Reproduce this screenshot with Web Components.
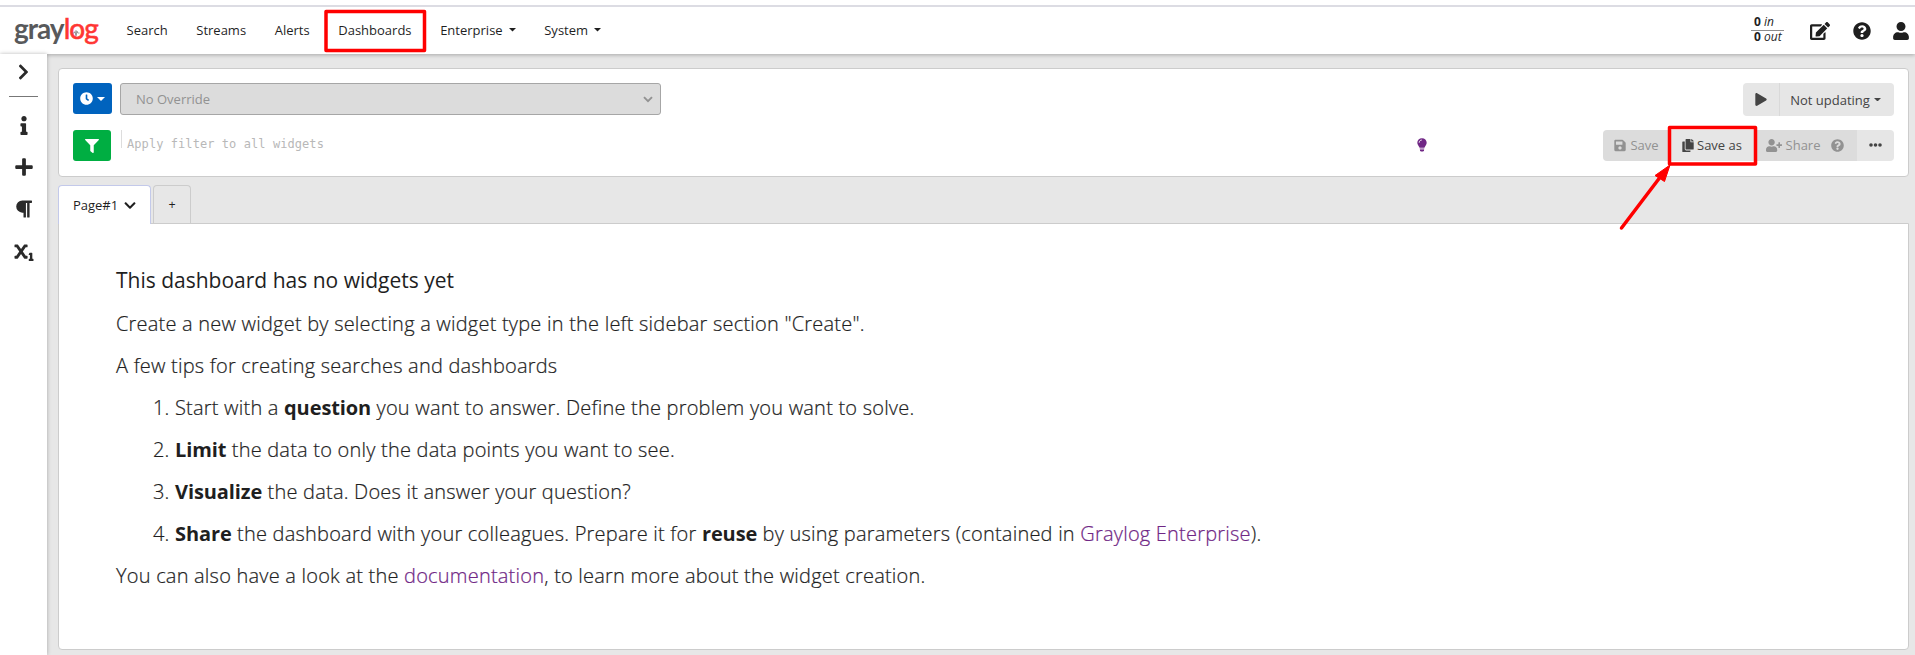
<!DOCTYPE html>
<html lang="en">
<head>
<meta charset="utf-8">
<title>Graylog - Dashboards</title>
<style>
html,body{margin:0;height:100%;overflow:hidden;background:#fff}
body{font-family:"Open Sans","Noto Sans",sans-serif;color:#1f1f1f}
</style>
</head>
<body>
<gl-app></gl-app>
<script>
const ICONS = {
  clock:['0 0 512 512','<path d="M256 8C119 8 8 119 8 256s111 248 248 248 248-111 248-248S393 8 256 8zm92.500 313l-20 25a16 16 0 0 1-22.500 2.500l-67-49.720a40 40 0 0 1-15-31.230V112a16 16 0 0 1 16-16h32a16 16 0 0 1 16 16v144l58 42.500a16 16 0 0 1 2.500 22.500z"/>'],
  filter:['0 0 512 512','<path d="M487.976 0H24.028C2.710 0-8.047 25.866 7.058 40.971L192 225.941V432c0 7.831 3.821 15.170 10.237 19.662l80 55.980C298.020 518.690 320 507.493 320 487.980V225.941l184.947-184.970C520.021 25.896 509.338 0 487.976 0z"/>'],
  right:['0 0 320 512','<path d="M285.476 272.971L91.132 467.314c-9.373 9.373-24.569 9.373-33.941 0l-22.667-22.667c-9.357-9.357-9.375-24.522-.04-33.901L188.505 256 34.484 101.255c-9.335-9.379-9.317-24.544.04-33.901l22.667-22.667c9.373-9.373 24.569-9.373 33.941 0L285.475 239.030c9.373 9.372 9.373 24.568.001 33.941z"/>'],
  down:['0 0 448 512','<path transform="translate(480 96) rotate(90)" d="M285.476 272.971L91.132 467.314c-9.373 9.373-24.569 9.373-33.941 0l-22.667-22.667c-9.357-9.357-9.375-24.522-.04-33.901L188.505 256 34.484 101.255c-9.335-9.379-9.317-24.544.04-33.901l22.667-22.667c9.373-9.373 24.569-9.373 33.941 0L285.475 239.030c9.373 9.372 9.373 24.568.001 33.941z"/>'],
  info:['0 0 192 512','<path d="M20 424.229h20V279.771H20c-11.046 0-20-8.954-20-20V212c0-11.046 8.954-20 20-20h112c11.046 0 20 8.954 20 20v212.229h20c11.046 0 20 8.954 20 20V492c0 11.046-8.954 20-20 20H20c-11.046 0-20-8.954-20-20v-47.771c0-11.046 8.954-20 20-20zM96 0C56.235 0 24 32.235 24 72s32.235 72 72 72 72-32.235 72-72S135.764 0 96 0z"/>'],
  plus:['0 0 448 512','<path d="M416 208H272V64c0-17.670-14.330-32-32-32h-32c-17.670 0-32 14.330-32 32v144H32c-17.670 0-32 14.330-32 32v32c0 17.670 14.330 32 32 32h144v144c0 17.670 14.330 32 32 32h32c17.670 0 32-14.330 32-32V304h144c17.670 0 32-14.330 32-32v-32c0-17.670-14.330-32-32-32z"/>'],
  para:['0 0 448 512','<path d="M448 48v32a16 16 0 0 1-16 16h-48v368a16 16 0 0 1-16 16h-32a16 16 0 0 1-16-16V96h-32v368a16 16 0 0 1-16 16h-32a16 16 0 0 1-16-16V352h-32a160 160 0 0 1 0-320h240a16 16 0 0 1 16 16z"/>'],
  sub:['0 0 512 512','<path d="M496 448h-16V304a16 16 0 0 0-16-16h-48a16 16 0 0 0-14.290 8.830l-16 32A16 16 0 0 0 400 352h16v96h-16a16 16 0 0 0-16 16v32a16 16 0 0 0 16 16h96a16 16 0 0 0 16-16v-32a16 16 0 0 0-16-16zM336 64h-67a16 16 0 0 0-13.140 6.870l-79.900 115-79.900-115A16 16 0 0 0 83 64H16A16 16 0 0 0 0 80v48a16 16 0 0 0 16 16h33.480l77.810 112-77.810 112H16a16 16 0 0 0-16 16v48a16 16 0 0 0 16 16h67a16 16 0 0 0 13.140-6.870l79.900-115 79.900 115A16 16 0 0 0 269 448h67a16 16 0 0 0 16-16v-48a16 16 0 0 0-16-16h-33.480l-77.810-112 77.810-112H336a16 16 0 0 0 16-16V80a16 16 0 0 0-16-16z"/>'],
  help:['0 0 512 512','<path d="M504 256c0 136.997-111.043 248-248 248S8 392.997 8 256C8 119.083 119.043 8 256 8s248 111.083 248 248zM262.655 90c-54.497 0-89.255 22.957-116.549 63.758-3.536 5.286-2.353 12.415 2.715 16.258l34.699 26.310c5.205 3.947 12.621 3.008 16.665-2.122 17.864-22.658 30.113-35.797 57.303-35.797 20.429 0 45.698 13.148 45.698 32.958 0 14.976-12.363 22.667-32.534 33.976C247.128 238.528 216 254.941 216 296v4c0 6.627 5.373 12 12 12h56c6.627 0 12-5.373 12-12v-1.333c0-28.462 83.186-29.647 83.186-106.667 0-58.002-60.165-102-116.531-102zM256 338c-25.365 0-46 20.635-46 46 0 25.364 20.635 46 46 46s46-20.636 46-46c0-25.365-20.635-46-46-46z"/>'],
  user:['0 0 448 512','<path d="M224 256c70.700 0 128-57.300 128-128S294.700 0 224 0 96 57.300 96 128s57.300 128 128 128zm89.600 32h-16.700c-22.200 10.200-46.900 16-72.900 16s-50.600-5.800-72.900-16h-16.700C60.200 288 0 348.200 0 422.400V464c0 26.500 21.500 48 48 48h352c26.500 0 48-21.500 48-48v-41.600c0-74.200-60.200-134.400-134.400-134.400z"/>'],
  userplus:['0 0 640 512','<path d="M624 208h-64v-64c0-8.800-7.200-16-16-16h-32c-8.800 0-16 7.200-16 16v64h-64c-8.800 0-16 7.200-16 16v32c0 8.800 7.200 16 16 16h64v64c0 8.800 7.200 16 16 16h32c8.800 0 16-7.200 16-16v-64h64c8.800 0 16-7.200 16-16v-32c0-8.800-7.200-16-16-16zM224 256c70.700 0 128-57.300 128-128S294.700 0 224 0 96 57.300 96 128s57.300 128 128 128zm89.600 32h-16.700c-22.200 10.200-46.900 16-72.900 16s-50.600-5.800-72.900-16h-16.700C60.200 288 0 348.200 0 422.400V464c0 26.500 21.500 48 48 48h352c26.500 0 48-21.500 48-48v-41.600c0-74.200-60.200-134.400-134.400-134.400z"/>'],
  edit:['0 0 576 512','<path d="M402.600 83.200l90.200 90.200c3.800 3.800 3.800 10 0 13.800L274.400 405.600l-92.800 10.300c-12.400 1.400-22.900-9.100-21.500-21.500l10.300-92.800L388.800 83.200c3.800-3.800 10-3.800 13.800 0zm162-22.900l-48.800-48.800c-15.200-15.200-39.900-15.200-55.200 0l-35.400 35.400c-3.800 3.800-3.800 10 0 13.800l90.200 90.200c3.800 3.800 10 3.800 13.800 0l35.400-35.400c15.200-15.300 15.200-40 0-55.200zM384 346.200V448H64V128h229.800c3.200 0 6.200-1.300 8.500-3.500l40-40c7.600-7.600 2.200-20.500-8.500-20.500H48C21.500 64 0 85.500 0 112v352c0 26.500 21.500 48 48 48h352c26.500 0 48-21.500 48-48V306.200c0-10.700-12.900-16-20.500-8.500l-40 40c-2.200 2.300-3.500 5.300-3.500 8.500z"/>'],
  save:['0 0 448 512','<path d="M433.941 129.941l-83.882-83.882A48 48 0 0 0 316.118 32H48C21.490 32 0 53.490 0 80v352c0 26.510 21.490 48 48 48h352c26.510 0 48-21.490 48-48V163.882a48 48 0 0 0-14.059-33.941zM224 416c-35.346 0-64-28.654-64-64 0-35.346 28.654-64 64-64s64 28.654 64 64c0 35.346-28.654 64-64 64zm96-304.520V212c0 6.627-5.373 12-12 12H76c-6.627 0-12-5.373-12-12V108c0-6.627 5.373-12 12-12h228.520c3.183 0 6.235 1.264 8.485 3.515l3.480 3.480A11.996 11.996 0 0 1 320 111.480z"/>'],
  copy:['0 0 448 512','<path d="M320 448v40c0 13.255-10.745 24-24 24H24c-13.255 0-24-10.745-24-24V120c0-13.255 10.745-24 24-24h72v296c0 30.879 25.121 56 56 56h168zm0-344V0H152c-13.255 0-24 10.745-24 24v368c0 13.255 10.745 24 24 24h272c13.255 0 24-10.745 24-24V128H344c-13.200 0-24-10.800-24-24zm120.971-31.029L375.029 7.029A24 24 0 0 0 358.059 0H352v96h96v-6.059a24 24 0 0 0-7.029-16.970z"/>'],
  play:['0 0 448 512','<path d="M424.400 214.700L72.400 6.600C43.800-10.300 0 6.100 0 47.900V464c0 37.500 40.700 60.100 72.400 41.300l352-208c31.400-18.500 31.500-64.100 0-82.600z"/>'],
  dots:['0 0 13 4','<circle cx="2" cy="2" r="1.800"/><circle cx="6.500" cy="2" r="1.800"/><circle cx="11" cy="2" r="1.800"/>'],
  bulb:['0 0 10 14','<path d="M5 .3C2.300.300.300 2.300.300 4.800c0 2 1.500 3.200 2.300 5h4.800c.8-1.800 2.300-3 2.300-5C9.700 2.300 7.700.300 5 .3z"/><path d="M2.700 10.200h4.600v1.200H2.700z" opacity=".55"/><path d="M3 11.600h4v1L6.200 13.500H3.800L3 12.600z"/><path d="M2.200 4.700c0-1.500 1-2.600 2.600-2.700" fill="none" stroke="#fff" stroke-width=".9"/>'],
  caret:['0 0 8 4','<path d="M0 0h8L4 4z"/>'],
  selectarrow:['0 0 10 7','<path d="M1 1.200l4 4 4-4" fill="none" stroke="currentColor" stroke-width="1.900"/>']
};
function define(name, html, css) {
  customElements.define(name, class extends HTMLElement {
    constructor() {
      super();
      const t = document.createElement('template');
      t.innerHTML = '<style>*{box-sizing:border-box}' + css + '</style>' + html;
      this.attachShadow({mode: 'open'}).appendChild(t.content.cloneNode(true));
    }
  });
}
customElements.define('gl-icon', class extends HTMLElement {
  connectedCallback() {
    if (this.shadowRoot) return;
    const [vb, body] = ICONS[this.getAttribute('name')];
    this.attachShadow({mode: 'open'}).innerHTML =
      `<style>:host{display:inline-flex;flex:none}svg{display:block;fill:currentColor}</style><svg viewBox="${vb}" width="${this.getAttribute('w')}" height="${this.getAttribute('h')}">${body}</svg>`;
  }
});

define('gl-logo', `<span class="g">gray</span><span class="r">l<span class="o">o<svg width="8" height="8" viewBox="0 0 8 8"><path d="M.5 4h1.800l.7-1.500L4 6.500 5 2l.7 2h1.800M4 1v6" fill="none" stroke="#888" stroke-width=".8"/></svg></span>g</span>`,
`:host{display:block;height:36px;font:700 28px/36px Lato,sans-serif;letter-spacing:-1px;white-space:nowrap}
.g{color:#58595b}.r{color:#ff3633;font-weight:400;-webkit-text-stroke:.6px #ff3633}.o{position:relative}svg{position:absolute;left:50%;bottom:8px;margin-left:-4.500px}`);

define('gl-nav-item', `<slot></slot>`,
`:host{display:flex;align-items:center;height:20px;font-size:13px;line-height:20px;gap:6px;white-space:nowrap}`);

define('gl-throughput', `<div><b>0</b> <i>in</i></div><div class="o"><b>0</b> <i>out</i></div>`,
`:host{display:block;width:33px;font-size:12px;line-height:14px}div{padding-left:3px;height:15px;white-space:nowrap}.o{border-top:1px solid #8c8c8c;line-height:11px}`);

define('gl-navbar', `<gl-logo></gl-logo>
<nav><gl-nav-item>Search</gl-nav-item><gl-nav-item>Streams</gl-nav-item><gl-nav-item>Alerts</gl-nav-item><gl-nav-item>Dashboards</gl-nav-item><gl-nav-item>Enterprise <gl-icon name="caret" w="7" h="3.500"></gl-icon></gl-nav-item><gl-nav-item>System <gl-icon name="caret" w="7" h="3.500"></gl-icon></gl-nav-item></nav>
<gl-throughput></gl-throughput>
<div class="icons"><gl-icon name="edit" w="20" h="18"></gl-icon><gl-icon name="help" w="18" h="18"></gl-icon><gl-icon name="user" w="16" h="18"></gl-icon></div>`,
`:host{display:flex;height:54px;padding:5px 6px 0 14px;box-sizing:border-box;background:linear-gradient(#dcdce3,#dcdce3) 0 5px/100% 2px no-repeat #fff;align-items:flex-start;position:relative;z-index:1;box-shadow:0 1px 4px rgba(0,0,0,.28)}
gl-logo{width:112.500px;margin-top:5px}nav{display:flex;gap:28.600px;flex:1;margin-top:15px}gl-throughput{margin-top:10px}.icons{display:flex;gap:23px;margin:17px 0 0 26px;align-items:center}.icons gl-icon:last-child{margin-left:-1px}`);

define('gl-sidebar', `<gl-icon name="right" w="11" h="18"></gl-icon><hr><gl-icon name="info" w="8" h="19"></gl-icon><gl-icon name="plus" w="18" h="20"></gl-icon><gl-icon name="para" w="17" h="20"></gl-icon><gl-icon name="sub" w="20" h="19"></gl-icon>`,
`:host{display:grid;grid-template-rows:36px 12px 42px 42px 42px 42px;place-items:center;align-content:start;width:47px;background:#fff;color:#2a2a2a;box-shadow:0 0 4px rgba(0,0,0,.28);position:relative;z-index:2}
hr{width:29px;height:1px;border:0;background:#777;margin:0}gl-icon[name=info],gl-icon[name=plus],gl-icon[name=para],gl-icon[name=sub]{margin-top:4px}`);

define('gl-button', `<slot></slot>`,
`:host{display:flex;box-sizing:border-box;align-items:center;justify-content:center;height:31px;font-size:13px;white-space:nowrap;color:#444;background:#e6e6e6}
:host([kind=primary]){background:#0063be;color:#fff;border-radius:3px;gap:4px}:host([kind=success]){background:#00ae42;color:#fff;border-radius:3px}
:host([disabled]){background:#dcdcdc;color:#929292}`);

define('gl-query-bar', `<div class="row"><gl-button kind="primary" style="width:39px"><gl-icon name="clock" w="13" h="13"></gl-icon><gl-icon name="caret" w="8" h="4"></gl-icon></gl-button>
<div class="select"><span>No Override</span><gl-icon name="selectarrow" w="10" h="7"></gl-icon></div><i></i>
<div class="group refresh"><gl-button style="width:36px"><gl-icon name="play" w="12" h="13"></gl-icon></gl-button><gl-button class="upd">Not updating<gl-icon name="caret" w="7" h="3.500"></gl-icon></gl-button></div></div>
<div class="row two"><gl-button kind="success" style="width:38px"><gl-icon name="filter" w="14" h="14"></gl-icon></gl-button><div class="input">Apply filter to all widgets</div><gl-icon class="bulb" name="bulb" w="10" h="14"></gl-icon><i></i>
<div class="group acts"><gl-button disabled style="width:65px;gap:4px;padding-left:2px"><gl-icon name="save" w="12" h="13"></gl-icon>Save</gl-button><gl-button style="width:89px;gap:3px;padding-right:1px"><gl-icon name="copy" w="12" h="13"></gl-icon>Save as</gl-button><gl-button disabled style="width:100px;gap:4px;padding-right:4px"><gl-icon name="userplus" w="16" h="13"></gl-icon>Share<gl-icon name="help" w="13" h="13" style="margin-left:7px"></gl-icon></gl-button><gl-button style="width:37px;padding-right:1px"><gl-icon name="dots" w="13" h="4"></gl-icon></gl-button></div></div>`,
`:host{display:flex;flex-direction:column;box-sizing:border-box;gap:15px;height:109px;padding:14px 14px 0;background:#fff;border:1px solid #ccc;border-radius:4px}
.row{display:flex;height:32px;align-items:flex-start}.two{height:31px}i{flex:1}.select{display:flex;align-items:center;justify-content:space-between;width:541px;height:32px;margin-left:8px;padding:0 7px 0 15px;background:#dcdcdc;border:1px solid #a6a6a6;border-radius:3px;font-size:13px;color:#929292}
.group{display:flex;border-radius:4px;overflow:hidden}.acts gl-button{padding-bottom:1px}.refresh gl-button{height:33px}.upd{width:115px;border-left:1px solid #d9d9d9;gap:4px;padding-right:3px}
.input{width:300px;height:18px;margin-left:10px;padding-left:5px;border-left:1px solid #ddd;font:12px/28px "DejaVu Sans Mono",monospace;letter-spacing:.07px;color:#b8b8b8;white-space:nowrap}.bulb{color:#702785;margin:8px 0 0 996px}`);

define('gl-tabs', `<div class="tab active">Page#1 <gl-icon name="down" w="12" h="13"></gl-icon></div><div class="tab add">+</div>`,
`:host{display:flex;gap:2px;height:38px;font-size:12.500px}.tab{display:flex;align-items:center;justify-content:center;height:38px;width:38px;border:1px solid #ccc;border-bottom:0;border-radius:4px 4px 0 0}
.active{width:93px;height:39px;background:#fff;border-color:#c3c9ea;gap:6px;position:relative;z-index:1;font-size:13px}`);

define('gl-empty', `<h2>This dashboard has no widgets yet</h2>
<p>Create a new widget by selecting a widget type in the left sidebar section "Create".</p>
<p>A few tips for creating searches and dashboards</p>
<ol><li>Start with a <b>question</b> you want to answer. Define the problem you want to solve.</li>
<li><b>Limit</b> the data to only the data points you want to see.</li>
<li><b>Visualize</b> the data. Does it answer your question?</li>
<li><b>Share</b> the dashboard with your colleagues. Prepare it for <b>reuse</b> by using parameters (contained in <a>Graylog Enterprise</a>).</li></ol>
<p>You can also have a look at the <a>documentation</a>, to learn more about the widget creation.</p>`,
`:host{display:block;box-sizing:border-box;height:427px;background:#fff;border:1px solid #ccc;border-radius:0 0 4px 4px;padding:34px 0 0 57px;font-size:20px;font-weight:300;letter-spacing:.21px;-webkit-text-stroke:.22px currentColor;line-height:42px;color:#1f1f1f}
h2{font-size:21px;font-weight:400;line-height:44px;margin:0 0 1px;letter-spacing:0;-webkit-text-stroke:0}p{margin:0}ol{margin:0;padding-left:59px}b{font-weight:700;letter-spacing:-.1px;-webkit-text-stroke:0}a{color:#702785}`);

define('gl-annotations', `<svg width="1915" height="655" viewBox="0 0 1915 655" fill="none" stroke="#f00" stroke-width="3.500" stroke-linejoin="round"><rect x="326" y="11.500" width="98.500" height="39"/><rect x="1669.500" y="127.500" width="86" height="36.500"/><path d="M1621.500 228L1661 176" stroke-linecap="round"/><path d="M1670 165L1655 175.500 1664.500 181.500z" fill="#f00" stroke-width="1"/></svg>`,
`:host{position:absolute;left:0;top:0;z-index:5;pointer-events:none}svg{display:block}`);

define('gl-app', `<gl-navbar></gl-navbar><div class="body"><gl-sidebar></gl-sidebar><main><gl-query-bar></gl-query-bar><gl-tabs></gl-tabs><gl-empty></gl-empty></main></div><gl-annotations></gl-annotations>`,
`:host{display:flex;flex-direction:column;height:655px;position:relative;background:#e7e7e7;overflow:hidden}.body{display:flex;flex:1}gl-sidebar{z-index:2}main{flex:1;padding:14px 6px 0 11px}gl-tabs{margin-top:8px}`);
</script>
</body>
</html>
